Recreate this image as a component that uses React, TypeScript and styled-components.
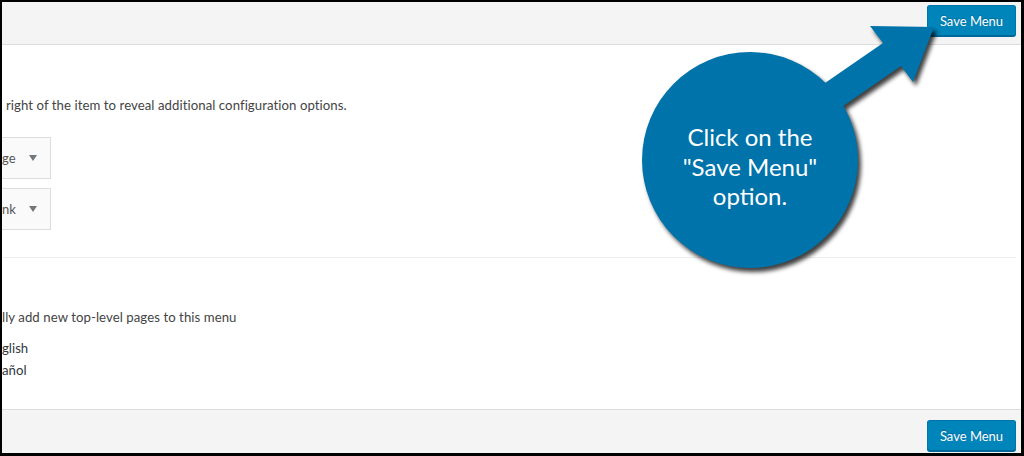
import React from 'react';
import styled, { createGlobalStyle } from 'styled-components';

const GlobalStyle = createGlobalStyle`
  html, body {
    margin: 0;
    padding: 0;
    background: #000;
  }
  * {
    box-sizing: border-box;
  }
`;

const Screen = styled.div`
  position: relative;
  width: 1024px;
  height: 456px;
  overflow: hidden;
  font-family: Lato, "Liberation Sans", sans-serif;
  font-size: 13px;
  color: #444;
`;

const Frame = styled.div`
  width: 100%;
  height: 100%;
  border-style: solid;
  border-color: #000;
  border-width: 2px 3px 3px 2px;
  background: #fff;
  display: flex;
  flex-direction: column;
`;

const Bar = styled.div<{ $bottom?: boolean }>`
  height: ${p => (p.$bottom ? '44px' : '43px')};
  flex: none;
  background: #f4f4f4;
  display: flex;
  justify-content: flex-end;
  align-items: flex-start;
  padding: ${p => (p.$bottom ? '10px 5px 0 0' : '3px 5px 0 0')};
  border-style: solid;
  border-color: #dddddd;
  border-width: ${p => (p.$bottom ? '1px 0 0 0' : '0 0 1px 0')};
`;

const SaveButton = styled.button`
  width: 89px;
  height: 31px;
  padding: 0;
  border: 1px solid #0073aa;
  border-bottom-color: #006799;
  border-radius: 3px;
  background: #0085ba;
  box-shadow: 0 1px 0 #006799;
  color: #fff;
  font-family: Lato, "Liberation Sans", sans-serif;
  font-size: 13px;
  text-shadow: 0 -1px 1px #006799;
`;

const Content = styled.div`
  flex: 1;
  display: flex;
  flex-direction: column;
`;

const Section = styled.div<{ $divider?: boolean }>`
  display: flex;
  flex-direction: column;
  align-items: flex-start;
  margin-right: 5px;
  border-bottom: ${p => (p.$divider ? '1px solid #eeeeee' : 'none')};
`;

const Instruction = styled.p<{ $top: number; $left: number }>`
  margin: ${p => p.$top}px 0 0 ${p => p.$left}px;
  font-size: 13.2px;
  letter-spacing: 0.06px;
  line-height: 18px;
  white-space: nowrap;
`;

const SelectStack = styled.div`
  display: flex;
  flex-direction: column;
  gap: 9px;
  margin: 23px 0 27px 0;
`;

const SelectBox = styled.div`
  width: 49px;
  height: 42px;
  display: flex;
  align-items: center;
  justify-content: space-between;
  padding: 0 13px 0 0;
  background: #fafafa;
  border: 1px solid #dddddd;
  border-left: none;
  color: #555;
`;

const Caret = styled.span`
  width: 0;
  height: 0;
  border-left: 4px solid transparent;
  border-right: 4px solid transparent;
  border-top: 6px solid #72777c;
`;

const LangList = styled.div`
  display: flex;
  flex-direction: column;
  gap: 4px;
  margin-top: 13px;
`;

const LangItem = styled.span`
  line-height: 18px;
  font-size: 13.2px;
  color: #32373c;
`;

const Overlay = styled.svg`
  position: absolute;
  inset: 0;
  pointer-events: none;
  filter: drop-shadow(3px 4px 2px rgba(0, 0, 0, 0.75));
`;

const CalloutText = styled.div`
  position: absolute;
  left: 650px;
  top: 122px;
  width: 200px;
  text-align: center;
  font-family: Lato, "Open Sans", sans-serif;
  font-size: 24px;
  line-height: 29.5px;
  color: #fff;
`;

export default function App() {
  return (
    <Screen>
      <GlobalStyle />
      <Frame>
        <Bar>
          <SaveButton>Save Menu</SaveButton>
        </Bar>
        <Content>
          <Section $divider>
            <Instruction $top={51} $left={4}>
              right of the item to reveal additional configuration options.
            </Instruction>
            <SelectStack>
              <SelectBox>
                <span>ge</span>
                <Caret />
              </SelectBox>
              <SelectBox>
                <span>nk</span>
                <Caret />
              </SelectBox>
            </SelectStack>
          </Section>
          <Section>
            <Instruction $top={50} $left={0}>
              lly add new top-level pages to this menu
            </Instruction>
            <LangList>
              <LangItem>glish</LangItem>
              <LangItem>añol</LangItem>
            </LangList>
          </Section>
        </Content>
        <Bar $bottom>
          <SaveButton>Save Menu</SaveButton>
        </Bar>
      </Frame>
      <Overlay width="1024" height="456" viewBox="0 0 1024 456">
        <g fill="#0073aa">
          <circle cx="750" cy="160" r="108" />
          <polygon points="767,123 883,43 870,26 934,27 913,82 901,66 784,147" />
        </g>
      </Overlay>
      <CalloutText>
        Click on the
        <br />
        "Save Menu"
        <br />
        option.
      </CalloutText>
    </Screen>
  );
}
